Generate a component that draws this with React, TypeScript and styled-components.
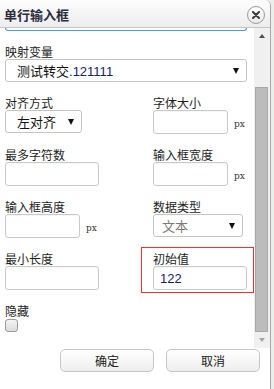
import React from "react";
import styled, { createGlobalStyle, css } from "styled-components";

const GlobalStyle = createGlobalStyle`
  html, body {
    margin: 0;
    padding: 0;
  }
  body {
    font-family: "Noto Sans CJK SC", "Liberation Sans", sans-serif;
    color: #222;
  }
`;

const uiFont = `"Liberation Sans", "Noto Sans CJK SC", sans-serif`;

function App() {
  return (
    <Page>
      <GlobalStyle />
      <Dialog>
        <Header>
          <Title>单行输入框</Title>
          <CloseButton>
            <svg width="8" height="8" viewBox="0 0 8 8">
              <path d="M1 1 L7 7 M7 1 L1 7" stroke="#3a3a3a" strokeWidth="2" strokeLinecap="round" />
            </svg>
          </CloseButton>
        </Header>
        <Body>
          <Content>
            <FocusedEdge />
            <FormGrid>
              <Field $wide>
                <Label>映射变量</Label>
                <Select $width={242}>
                  <SelectText>
                    测试转交.<Num>121111</Num>
                  </SelectText>
                  <Caret />
                </Select>
              </Field>

              <Field>
                <Label>对齐方式</Label>
                <Select $width={77}>
                  <SelectText>左对齐</SelectText>
                  <Caret />
                </Select>
              </Field>
              <Field>
                <Label>字体大小</Label>
                <ControlRow>
                  <TextBox $width={75} />
                  <Unit>px</Unit>
                </ControlRow>
              </Field>

              <Field>
                <Label>最多字符数</Label>
                <TextBox $width={94} />
              </Field>
              <Field>
                <Label>输入框宽度</Label>
                <ControlRow>
                  <TextBox $width={75} />
                  <Unit>px</Unit>
                </ControlRow>
              </Field>

              <Field>
                <Label>输入框高度</Label>
                <ControlRow>
                  <TextBox $width={75} />
                  <Unit>px</Unit>
                </ControlRow>
              </Field>
              <Field>
                <Label>数据类型</Label>
                <Select $width={90} $padLeft={8}>
                  <SelectText $muted>文本</SelectText>
                  <Caret />
                </Select>
              </Field>

              <Field>
                <Label>最小长度</Label>
                <TextBox $width={94} />
              </Field>
              <Field $highlight>
                <Label>初始值</Label>
                <TextBox $width={94}>
                  <Num>122</Num>
                </TextBox>
              </Field>

              <Field $wide>
                <Label>隐藏</Label>
                <CheckBox />
              </Field>
            </FormGrid>
          </Content>
          <ScrollBar>
            <ArrowCell>
              <ArrowUp />
            </ArrowCell>
            <Track>
              <Thumb />
            </Track>
            <ArrowCell>
              <ArrowDown />
            </ArrowCell>
          </ScrollBar>
        </Body>
        <Footer>
          <Button>确定</Button>
          <Button>取消</Button>
        </Footer>
      </Dialog>
    </Page>
  );
}

const Page = styled.div`
  display: flex;
  height: 389px;
  overflow: hidden;
  background: #eceee9;
`;

const Dialog = styled.div`
  width: 270px;
  flex: none;
  display: flex;
  flex-direction: column;
  background: #fff;
  border-right: 1px solid #a9a9a9;
  border-top-right-radius: 6px;
  overflow: hidden;
`;

const Header = styled.div`
  height: 27px;
  flex: none;
  display: flex;
  align-items: center;
  justify-content: space-between;
  padding: 0 5px 0 4px;
  background: linear-gradient(#fdfdfd, #ededed);
  border-bottom: 1px solid #c4c4c4;
`;

const Title = styled.div`
  font-size: 13px;
  font-weight: 700;
  color: #2b2b3d;
  line-height: 16px;
  padding-top: 2px;
`;

const CloseButton = styled.div`
  width: 16px;
  height: 16px;
  border: 1px solid #9a9a9a;
  border-radius: 50%;
  background: linear-gradient(#ffffff, #e9e9e9);
  display: flex;
  align-items: center;
  justify-content: center;
  margin-top: 2px;
`;

const Body = styled.div`
  height: 320px;
  flex: none;
  display: flex;
`;

const Content = styled.div`
  flex: 1;
  overflow: hidden;
  padding-left: 5px;
`;

const FocusedEdge = styled.div`
  width: 240px;
  height: 2px;
  border: 1px solid #4a9fe0;
  border-top: none;
  border-radius: 0 0 3px 3px;
  margin-bottom: 13px;
`;

const FormGrid = styled.div`
  display: grid;
  grid-template-columns: 148px 1fr;
  row-gap: 13px;
`;

/* red frame around the field being pointed out; negative margins keep the grid rhythm */
const highlightBox = css`
  border: 1px solid #ff2b2b;
  margin: -4px 0 -3px -12px;
  padding: 3px 0 2px 11px;
`;

const Field = styled.div<{ $wide?: boolean; $highlight?: boolean }>`
  display: flex;
  flex-direction: column;
  align-items: flex-start;
  grid-column: ${(p) => (p.$wide ? "1 / -1" : "auto")};
  ${(p) => p.$highlight && highlightBox}
`;

const Label = styled.div`
  font-size: 12px;
  line-height: 15px;
  height: 15px;
  color: #1e1e1e;
  white-space: nowrap;
`;

const ControlRow = styled.div`
  display: flex;
  align-items: center;
`;

const TextBox = styled.div<{ $width: number }>`
  width: ${(p) => p.$width}px;
  height: 24px;
  box-sizing: border-box;
  border: 1px solid #c9c9c9;
  border-radius: 3px;
  background: #fff;
  box-shadow: inset 0 1px 1px rgba(0, 0, 0, 0.04);
  display: flex;
  align-items: center;
  padding-left: 6px;
  font-family: ${uiFont};
  font-size: 13px;
`;

const Unit = styled.span`
  font-family: "DejaVu Serif", "Liberation Serif", serif;
  font-size: 9px;
  color: #333;
  margin-left: 6px;
  padding-top: 4px;
`;

const Select = styled.div<{ $width: number; $padLeft?: number }>`
  width: ${(p) => p.$width}px;
  height: 23px;
  box-sizing: border-box;
  border: 1px solid #c4c4c4;
  border-radius: 3px;
  background: #fff;
  display: flex;
  align-items: center;
  justify-content: space-between;
  padding: 0 7px 0 ${(p) => p.$padLeft ?? 11}px;
`;

const SelectText = styled.span<{ $muted?: boolean }>`
  font-family: ${uiFont};
  font-size: 13px;
  color: ${(p) => (p.$muted ? "#7a7a7a" : "#111")};
  white-space: nowrap;
`;

const Num = styled.span`
  font-family: ${uiFont};
  font-size: 13px;
  color: #17206a;
`;

const Caret = styled.span`
  width: 0;
  height: 0;
  border-left: 3px solid transparent;
  border-right: 3px solid transparent;
  border-top: 6px solid #111;
`;

const CheckBox = styled.div`
  width: 11px;
  height: 11px;
  margin-top: 1px;
  border: 1px solid #9a9a9a;
  border-radius: 3px;
  background: linear-gradient(#f4f4f4, #dcdcdc);
`;

const ScrollBar = styled.div`
  width: 16px;
  flex: none;
  display: flex;
  flex-direction: column;
  background: #f0f0f0;
`;

const ArrowCell = styled.div`
  height: 16px;
  flex: none;
  display: flex;
  align-items: center;
  justify-content: center;
`;

const ArrowUp = styled.span`
  width: 0;
  height: 0;
  border-left: 3.5px solid transparent;
  border-right: 3.5px solid transparent;
  border-bottom: 4px solid #505050;
`;

const ArrowDown = styled.span`
  width: 0;
  height: 0;
  border-left: 3.5px solid transparent;
  border-right: 3.5px solid transparent;
  border-top: 4px solid #a3a3a3;
`;

const Track = styled.div`
  flex: 1;
  display: flex;
  flex-direction: column;
  justify-content: flex-end;
  padding-left: 1px;
`;

const Thumb = styled.div`
  width: 11px;
  height: 243px;
  background: #bcbcbc;
  border: 1px solid #a8a8a8;
`;

const Footer = styled.div`
  flex: 1;
  display: flex;
  justify-content: flex-end;
  align-items: flex-start;
  gap: 12px;
  padding: 1px 10px 0 0;
  background: #fff;
`;

const Button = styled.div`
  width: 94px;
  height: 23px;
  box-sizing: border-box;
  border: 1px solid #c6c6c6;
  border-radius: 5px;
  background: linear-gradient(#ffffff, #eeeeee);
  display: flex;
  align-items: center;
  justify-content: center;
  font-size: 12px;
  color: #222;
`;

export default App;
